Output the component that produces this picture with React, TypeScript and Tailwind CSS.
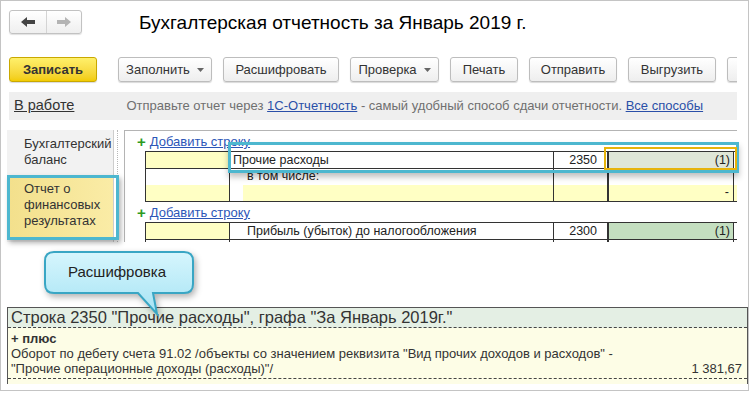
import React from 'react'

function ArrowLeft({ color }: { color: string }) {
  return (
    <svg width="14" height="10" viewBox="0 0 14 10">
      <path d="M0 5 L6 0 L6 3 L14 3 L14 7 L6 7 L6 10 Z" fill={color} />
    </svg>
  )
}

function ArrowRight({ color }: { color: string }) {
  return (
    <svg width="14" height="10" viewBox="0 0 14 10">
      <path d="M14 5 L8 0 L8 3 L0 3 L0 7 L8 7 L8 10 Z" fill={color} />
    </svg>
  )
}

function Caret() {
  return (
    <svg width="7" height="4" viewBox="0 0 7 4" className="ml-[7px]">
      <path d="M0 0 H7 L3.5 4 Z" fill="#666" />
    </svg>
  )
}

function Btn({ w, children, caret }: { w: string; children?: React.ReactNode; caret?: boolean }) {
  return (
    <div
      className={`${w} shrink-0 h-[25px] flex items-center justify-center rounded-[3px] border border-[#bdbdbd] bg-gradient-to-b from-white to-[#eeeeee] shadow-[0_1px_1px_rgba(0,0,0,0.15)] text-[13px] text-[#333]`}
    >
      {children}
      {caret && <Caret />}
    </div>
  )
}

function AddRow() {
  return (
    <div className="h-[20px] flex items-center pl-[12px] pt-[1px]">
      <span className="text-[#2e9a1e] font-bold text-[15px] leading-none">+</span>
      <span className="ml-[4px] text-[13px] text-[#2c56b8] underline leading-none">Добавить строку</span>
    </div>
  )
}

export default function App() {
  return (
    <div className="relative w-[751px] h-[393px] bg-white overflow-hidden font-['Liberation_Sans',Arial,sans-serif] text-[#333]">
      <div className="w-[749px] h-[391px] border border-[#c4c4c4] flex flex-col">
        {/* заголовок */}
        <div className="flex items-center h-[24px] mt-[9px] ml-[8px]">
          <div className="flex w-[73px] h-[24px] rounded-[3px] border border-[#c2c2c2] bg-gradient-to-b from-white to-[#efefef] shadow-[0_1px_1px_rgba(0,0,0,0.12)]">
            <div className="w-[37px] flex items-center justify-center border-r border-[#d4d4d4]">
              <ArrowLeft color="#444" />
            </div>
            <div className="flex-1 flex items-center justify-center">
              <ArrowRight color="#b4b4b4" />
            </div>
          </div>
          <h1 className="ml-[57px] text-[19px] text-black leading-none">Бухгалтерская отчетность за Январь 2019 г.</h1>
        </div>

        {/* панель команд */}
        <div className="mt-[23px] ml-[8px] w-[728px] h-[27px] flex gap-[11px] overflow-hidden">
          <div className="w-[88px] shrink-0 h-[25px] mr-[10px] flex items-center justify-center rounded-[3px] border border-[#c9a800] bg-gradient-to-b from-[#fff06a] to-[#f2cc00] shadow-[0_1px_1px_rgba(0,0,0,0.15)] text-[13px] font-bold text-[#333]">
            Записать
          </div>
          <Btn w="w-[94px]" caret>Заполнить</Btn>
          <Btn w="w-[116px]">Расшифровать</Btn>
          <Btn w="w-[89px]" caret>Проверка</Btn>
          <Btn w="w-[68px]">Печать</Btn>
          <Btn w="w-[88px]">Отправить</Btn>
          <Btn w="w-[88px]">Выгрузить</Btn>
          <Btn w="w-[88px]" />
        </div>

        {/* статус */}
        <div className="mt-[8px] ml-[8px] w-[728px] h-[28px] bg-[#efefef] flex items-center">
          <span className="pl-[5px] text-[14.5px] underline text-[#333]">В работе</span>
          <span className="ml-[52px] text-[13px] text-[#707070]">
            Отправьте отчет через{' '}
            <span className="text-[#2a4fa8] underline">1С-Отчетность</span> - самый удобный способ сдачи отчетности.{' '}
            <span className="text-[#2a4fa8] underline">Все способы</span>
          </span>
        </div>

        {/* основная область */}
        <div className="mt-[10px] h-[112px] flex">
          <div className="ml-[6px] w-[107px] bg-[#f2f2f2] border-r border-[#cdcdcd] flex flex-col text-[13px] leading-[16px] text-[#333]">
            <div className="h-[46px] pl-[17px] pt-[6px]">
              Бухгалтерский
              <br />
              баланс
            </div>
            <div className="h-[62px] ml-[2px] pl-[15px] pt-[5px] bg-gradient-to-r from-[#f3e08c] to-[#faeca6]">
              Отчет о
              <br />
              финансовых
              <br />
              результатах
            </div>
          </div>
          <div className="w-[3px]" />
          <div className="w-[1px] border-l border-dotted border-[#b8b8b8]" />
          <div className="w-[6px]" />
          <div className="w-[613px] border-l border-t border-[#b4b4b4] overflow-hidden text-[12.5px] text-[#222]">
            <AddRow />
            <div className="ml-[20px] w-[592px]">
              <div className="flex h-[17px] border-t border-[#333]">
                <div className="w-[84px] border-l border-[#333] bg-[#ffffc4]" />
                <div className="w-[324px] border-l border-[#333] pl-[3px] leading-[16px]">Прочие расходы</div>
                <div className="w-[54px] border-l border-[#333] pr-[10px] text-right leading-[16px]">2350</div>
                <div className="w-[127px] border-l-2 border-r border-[#333] bg-[#dfe6d7] pr-[3px] text-right leading-[16px]">(1)</div>
              </div>
              <div className="flex h-[34px] border-t border-b border-[#333]">
                <div className="w-[84px] border-l border-[#333] flex flex-col">
                  <div className="h-[16px]" />
                  <div className="flex-1 bg-[#ffffc4]" />
                </div>
                <div className="w-[324px] border-l border-[#333] flex flex-col">
                  <div className="h-[16px] pl-[17px] leading-[14px]">в том числе:</div>
                  <div className="flex-1 ml-[13px] bg-[#ffffc4]" />
                </div>
                <div className="w-[54px] border-l border-[#333] flex flex-col">
                  <div className="h-[16px]" />
                  <div className="flex-1 bg-[#ffffc4]" />
                </div>
                <div className="w-[127px] border-l-2 border-r border-[#333] flex flex-col">
                  <div className="h-[16px]" />
                  <div className="flex-1 bg-[#ffffc4] text-right pr-[4px] leading-[14px]">-</div>
                </div>
                <div className="w-[3px] flex flex-col">
                  <div className="h-[16px]" />
                  <div className="flex-1 bg-[#ffffc4]" />
                </div>
              </div>
            </div>
            <AddRow />
            <div className="ml-[20px] w-[592px]">
              <div className="flex h-[18px] border-t border-b border-[#333]">
                <div className="w-[84px] border-l border-[#333] bg-[#ffffc4]" />
                <div className="w-[324px] border-l border-[#333] pl-[17px] leading-[16px]">Прибыль (убыток) до налогообложения</div>
                <div className="w-[54px] border-l border-[#333] pr-[10px] text-right leading-[16px]">2300</div>
                <div className="w-[127px] border-l-2 border-r border-[#333] bg-[#c4dfc0] pr-[3px] text-right leading-[16px]">(1)</div>
              </div>
              <div className="flex h-[6px]">
                <div className="w-[84px] border-l border-[#333]" />
                <div className="w-[324px] border-l border-[#333]" />
                <div className="w-[54px] border-l border-[#333]" />
                <div className="w-[127px] border-l-2 border-r border-[#333]" />
              </div>
            </div>
          </div>
        </div>

        {/* расшифровка */}
        <div className="mt-[65px] ml-[6px] w-[741px] h-[77px] border-l border-t border-r border-[#555] flex flex-col">
          <div className="h-[20px] bg-[#e4efe4] border-b border-dashed border-[#444] pl-[3px] text-[16.5px] leading-[19px] text-[#333]">
            Строка 2350 "Прочие расходы", графа "За Январь 2019г."
          </div>
          <div className="flex-1 bg-[#fdfde6] flex flex-col">
            <div className="h-[51px] border-b border-dashed border-[#444] pt-[3px] pl-[3px] pr-[5px] text-[13px] leading-[15px] text-[#333]">
              <div className="font-bold">+ плюс</div>
              <div>Оборот по дебету счета 91.02 /объекты со значением реквизита "Вид прочих доходов и расходов" -</div>
              <div className="flex justify-between">
                <span>"Прочие операционные доходы (расходы)"/</span>
                <span>1 381,67</span>
              </div>
            </div>
          </div>
        </div>
      </div>

      {/* выделения */}
      <div className="absolute left-[7px] top-[175px] w-[112px] h-[65px] border-[3px] border-[#4db7cf] shadow-[2px_3px_5px_rgba(0,0,0,0.3)]" />
      <div className="absolute left-[228px] top-[142px] w-[511px] h-[31px] border-[3px] border-[#4db7cf] shadow-[0_4px_6px_rgba(0,0,0,0.25)]" />
      <div className="absolute left-[604px] top-[147px] w-[133px] h-[23px] border-2 border-[#e6b30b]" />

      {/* выноска */}
      <svg
        className="absolute left-[43px] top-[250px] drop-shadow-[2px_3px_3px_rgba(0,0,0,0.3)]"
        width="156"
        height="68"
        viewBox="0 0 156 68"
      >
        <defs>
          <linearGradient id="callout" x1="0" y1="0" x2="0" y2="1">
            <stop offset="0" stopColor="#d6f6fd" />
            <stop offset="1" stopColor="#a6e3f4" />
          </linearGradient>
        </defs>
        <path
          d="M11 2 H141 Q150 2 150 11 V34 Q150 43 141 43 H110 L114 64 L95 43 H11 Q2 43 2 34 V11 Q2 2 11 2 Z"
          fill="url(#callout)"
          stroke="#39a6c4"
          strokeWidth="2"
        />
      </svg>
      <div className="absolute left-[45px] top-[252px] w-[148px] h-[41px] flex items-center pl-[23px] text-[15px] text-[#222]">
        Расшифровка
      </div>
    </div>
  )
}
